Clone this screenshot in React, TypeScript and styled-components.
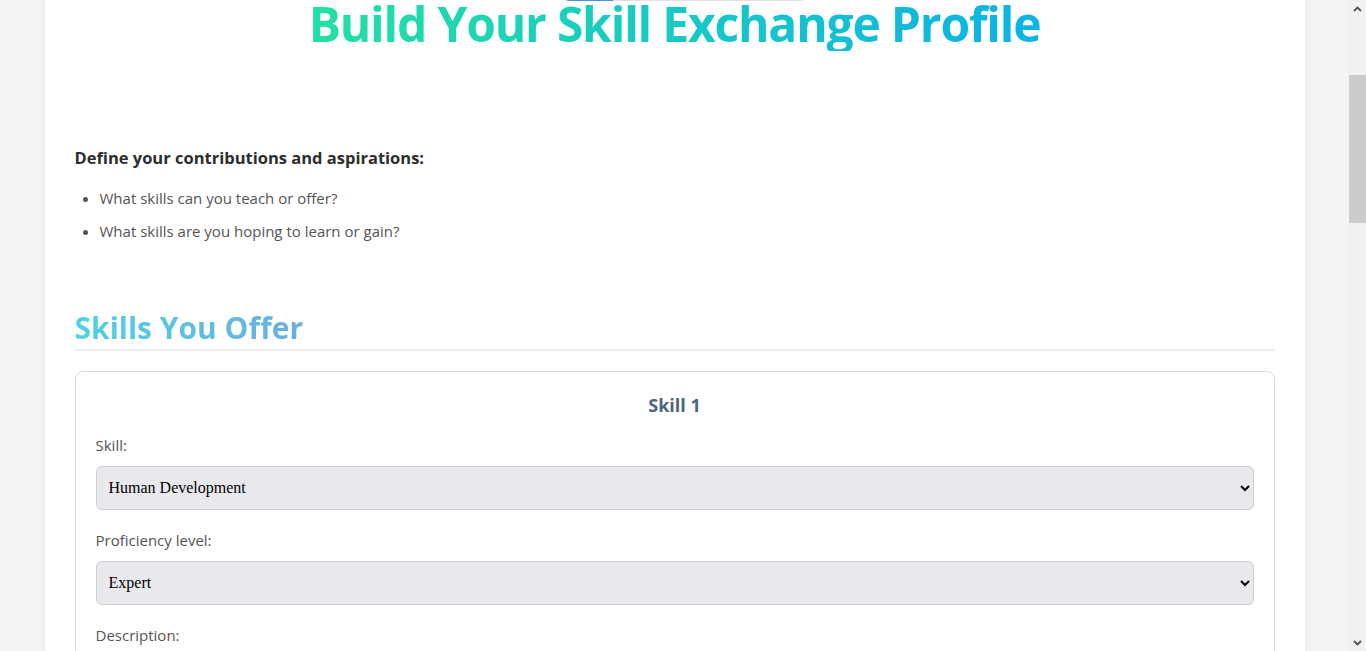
import React, { useCallback, useLayoutEffect, useRef, useState } from 'react';
import styled, { createGlobalStyle } from 'styled-components';

const GlobalStyle = createGlobalStyle`
  html, body {
    margin: 0;
    padding: 0;
    height: 100%;
    overflow: hidden;
  }
  body {
    background: #f4f4f4;
    font-family: "Open Sans", "Noto Sans", sans-serif;
    color: #333;
  }
  * { box-sizing: border-box; }
`;

const Frame = styled.div`
  display: flex;
  height: 100vh;
`;

const Scroller = styled.div`
  flex: 1;
  min-width: 0;
  overflow-y: scroll;
  scrollbar-width: none;

  &::-webkit-scrollbar {
    display: none;
  }
`;

const ScrollTrack = styled.div`
  width: 17px;
  flex: none;
  display: flex;
  flex-direction: column;
  background: #f1f1f1;
`;

const ScrollArrow = styled.div`
  height: 17px;
  flex: none;
  display: flex;
  align-items: center;
  justify-content: center;
  color: #505050;
`;

const ThumbArea = styled.div`
  flex: 1;
`;

const Thumb = styled.div`
  width: 100%;
  background: #cbcbcb;
`;

const Page = styled.div`
  padding: 100px 0 0;
`;

const Container = styled.div`
  max-width: 1260px;
  margin: 0 auto;
  background: #fff;
  padding: 110px 30px 40px;
  box-shadow: 0 0 8px rgba(0, 0, 0, 0.06);
`;

const StepText = styled.div`
  text-align: center;
  font-size: 14px;
  color: #888;
  margin-bottom: 21px;
`;

const ProgressTrack = styled.div`
  width: 240px;
  height: 8px;
  margin-left: calc(50% - 110px);
  background: #e2e2e2;
  border-radius: 4px;
  overflow: hidden;
`;

const ProgressFill = styled.div<{ $pct: number }>`
  width: ${p => p.$pct}%;
  height: 100%;
  background: #4a90e2;
`;

const Title = styled.h1`
  margin: -3px auto 95px;
  text-align: center;
  font-size: 48px;
  letter-spacing: -1.2px;
  line-height: 1.1;
  font-weight: 700;
  background: linear-gradient(90deg, #22e0a4, #0cb3e6);
  -webkit-background-clip: text;
  background-clip: text;
  color: transparent;
  width: fit-content;
`;

const IntroHeading = styled.h3`
  margin: 0 0 18px;
  font-size: 16.5px;
  font-weight: 700;
  color: #2d2d2d;
`;

const IntroList = styled.ul`
  margin: 0 0 65px;
  padding-left: 25px;
  color: #555;
  font-size: 15px;

  li {
    margin-bottom: 10px;
    line-height: 23px;
  }
`;

const SectionTitle = styled.h2`
  margin: 0 0 20px;
  padding-bottom: 2px;
  border-bottom: 2px solid #ececec;
  font-size: 30px;
  font-weight: 700;
  line-height: 1.3;

  span {
    background: linear-gradient(90deg, #4fd2e0, #6aaee2);
    -webkit-background-clip: text;
    background-clip: text;
    color: transparent;
  }
`;

const Card = styled.div`
  border: 1px solid #dcdcdc;
  border-radius: 8px;
  padding: 20px 20px 24px;
  margin-bottom: 20px;
`;

const CardTitle = styled.h3`
  margin: 0 0 14px;
  text-align: center;
  font-size: 18px;
  font-weight: 700;
  line-height: 27px;
  color: #4a6580;
`;

const Label = styled.label`
  display: block;
  font-size: 15px;
  line-height: 24px;
  color: #555;
  margin-bottom: 9px;
`;

const Select = styled.select`
  display: block;
  width: 100%;
  height: 44px;
  padding: 0 8px;
  margin-bottom: 18px;
  background: #e9e9ed;
  border: 1px solid #cfcfcf;
  border-radius: 6px;
  font-family: "Liberation Serif", serif;
  font-size: 16px;
  color: #000;
`;

const TextArea = styled.textarea`
  display: block;
  width: 100%;
  height: 110px;
  padding: 10px;
  border: 1px solid #cfcfcf;
  border-radius: 6px;
  font-family: "Liberation Serif", serif;
  font-size: 16px;
  resize: vertical;
`;

const AddButton = styled.button`
  display: block;
  margin: 0 0 50px;
  padding: 10px 20px;
  border: 1px dashed #4fd2e0;
  border-radius: 6px;
  background: #fff;
  color: #3bb7c9;
  font-family: inherit;
  font-size: 15px;
  cursor: pointer;
`;

const SubmitButton = styled.button`
  display: block;
  margin: 30px auto 0;
  padding: 12px 40px;
  border: none;
  border-radius: 8px;
  background: linear-gradient(90deg, #22e0a4, #0cb3e6);
  color: #fff;
  font-family: inherit;
  font-size: 17px;
  font-weight: 700;
  cursor: pointer;
`;

const skills = ['Human Development', 'Web Development', 'Graphic Design', 'Music', 'Languages', 'Cooking'];
const levels = ['Beginner', 'Intermediate', 'Advanced', 'Expert'];

const SkillCard = ({ n, skill, level }: { n: number; skill: string; level: string }) => (
  <Card>
    <CardTitle>Skill {n}</CardTitle>
    <Label>Skill:</Label>
    <Select defaultValue={skill}>
      {skills.map(s => <option key={s}>{s}</option>)}
    </Select>
    <Label>Proficiency level:</Label>
    <Select defaultValue={level}>
      {levels.map(l => <option key={l}>{l}</option>)}
    </Select>
    <Label>Description:</Label>
    <TextArea />
  </Card>
);

const Arrow = ({ up }: { up?: boolean }) => (
  <svg width="9" height="6" viewBox="0 0 9 6">
    <path
      d={up ? 'M1 5 L4.5 1.5 L8 5' : 'M1 1 L4.5 4.5 L8 1'}
      fill="none"
      stroke="currentColor"
      strokeWidth="1.8"
    />
  </svg>
);

export default function App() {
  const scrollRef = useRef<HTMLDivElement>(null);
  const trackRef = useRef<HTMLDivElement>(null);
  const barRef = useRef<HTMLDivElement>(null);
  const [thumb, setThumb] = useState({ top: 0, height: 0 });

  const measure = useCallback(() => {
    const box = scrollRef.current;
    const track = trackRef.current;
    if (!box || !track) return;
    const len = track.clientHeight;
    setThumb({
      top: (box.scrollTop / box.scrollHeight) * len,
      height: (box.clientHeight / box.scrollHeight) * len,
    });
  }, []);

  useLayoutEffect(() => {
    // the shot is taken with the page scrolled so the progress bar just peeks in
    const box = scrollRef.current;
    const el = barRef.current;
    if (!box || !el) return;
    const r = el.getBoundingClientRect();
    box.scrollTop = r.bottom + box.scrollTop - 1;
    measure();
  }, [measure]);

  return (
    <>
      <GlobalStyle />
      <Frame>
        <Scroller ref={scrollRef} onScroll={measure}>
          <Page>
            <Container>
              <StepText>Step 2 of 5</StepText>
              <ProgressTrack ref={barRef}>
                <ProgressFill $pct={20} />
              </ProgressTrack>
              <Title>Build Your Skill Exchange Profile</Title>

              <IntroHeading>Define your contributions and aspirations:</IntroHeading>
              <IntroList>
                <li>What skills can you teach or offer?</li>
                <li>What skills are you hoping to learn or gain?</li>
              </IntroList>

              <SectionTitle><span>Skills You Offer</span></SectionTitle>
              <SkillCard n={1} skill="Human Development" level="Expert" />
              <SkillCard n={2} skill="Web Development" level="Intermediate" />
              <AddButton type="button">+ Add another skill</AddButton>

              <SectionTitle><span>Skills You Want</span></SectionTitle>
              <SkillCard n={1} skill="Music" level="Beginner" />
              <SkillCard n={2} skill="Graphic Design" level="Beginner" />
              <AddButton type="button">+ Add another skill</AddButton>

              <SubmitButton type="button">Save Profile</SubmitButton>
            </Container>
          </Page>
        </Scroller>
        <ScrollTrack>
          <ScrollArrow><Arrow up /></ScrollArrow>
          <ThumbArea ref={trackRef}>
            <Thumb style={{ marginTop: thumb.top, height: thumb.height }} />
          </ThumbArea>
          <ScrollArrow><Arrow /></ScrollArrow>
        </ScrollTrack>
      </Frame>
    </>
  );
}
